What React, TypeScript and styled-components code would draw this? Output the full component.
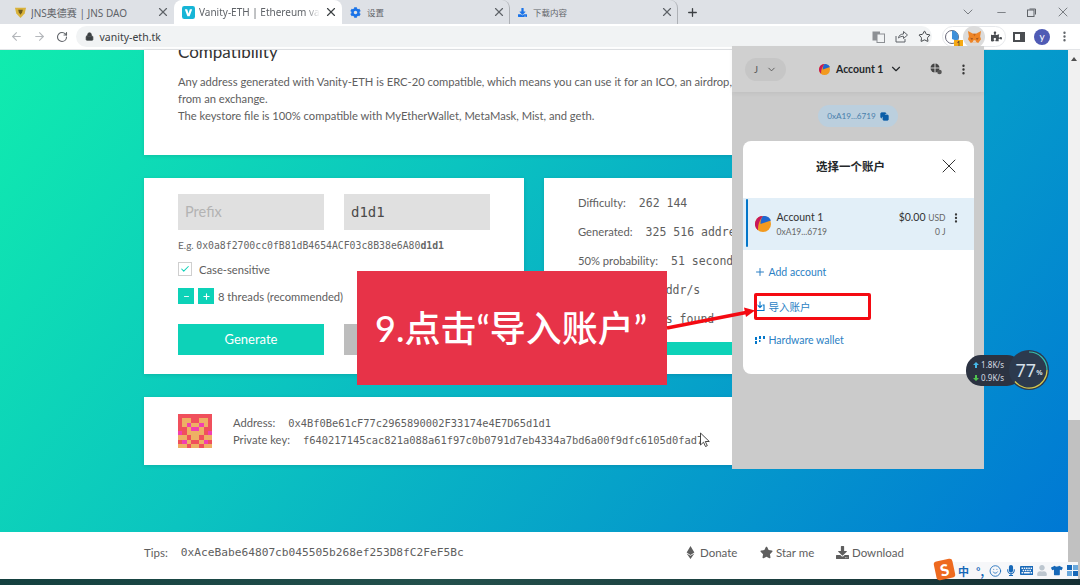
import React from "react";
import styled, { createGlobalStyle } from "styled-components";
import { ArrowLeft, ArrowRight, RotateCw, X, Plus, Minus, ChevronDown, Lock, Star, MoreVertical, Check, Smile, Copy } from "lucide-react";
import { FaCog, FaDownload, FaEthereum, FaKeyboard, FaMicrophone, FaPuzzlePiece, FaStar, FaTshirt, FaUser } from "react-icons/fa";

const SANS = `"Lato", "Noto Sans CJK SC", sans-serif`;
const UI = `"Noto Sans", "Noto Sans CJK SC", sans-serif`;
const MONO = `"DejaVu Sans Mono", "Liberation Mono", monospace`;
const TEAL = "#0dd2b8";

const GlobalStyle = createGlobalStyle`
    html, body {
        margin: 0;
        padding: 0;
        width: 1080px;
        height: 585px;
        overflow: hidden;
        background: #fff;
    }
`;

const Screen = styled.div`
    position: relative;
    display: flex;
    flex-direction: column;
    width: 1080px;
    height: 585px;
    overflow: hidden;
    font-family: ${SANS};
    color: #5e5e5e;
`;

/* browser chrome */
const TabStrip = styled.div`
    display: flex;
    align-items: stretch;
    height: 24px;
    padding-left: 6px;
    background: #dee1e6;
    flex-shrink: 0;
`;

const Tab = styled.div<{ $active?: boolean; $divider?: boolean }>`
    display: flex;
    align-items: center;
    gap: 4px;
    width: 168px;
    box-sizing: border-box;
    padding: 0 3px 0 8px;
    background: ${p => (p.$active ? "#fff" : "transparent")};
    border-radius: 8px 8px 0 0;
    border-right: ${p => (p.$divider ? "1px solid #aeb1b6" : "1px solid transparent")};
    font-family: ${UI};
    font-size: 10px;
    color: #5f6368;
`;

const TabTitle = styled.span<{ $fade?: boolean; $cjk?: boolean }>`
    flex: 1;
    overflow: hidden;
    white-space: nowrap;
    ${p => (p.$fade ? "mask-image: linear-gradient(90deg, #000 88%, transparent);" : "")}
    ${p => (p.$cjk ? "font-size: 8.5px; padding-left: 2px;" : "")}
`;

const NewTab = styled.div`
    display: flex;
    align-items: center;
    margin-left: 8px;
    color: #3c4043;
`;

const WindowButtons = styled.div`
    display: flex;
    align-items: center;
    gap: 19px;
    margin-left: auto;
    padding-right: 9px;
    color: #5f6368;
`;

const Toolbar = styled.div`
    display: flex;
    align-items: center;
    height: 26px;
    box-sizing: border-box;
    padding: 0 0 0 9px;
    gap: 9px;
    background: #fff;
    border-bottom: 1px solid #e3e5e8;
    flex-shrink: 0;
`;

const NavIcon = styled.span<{ $muted?: boolean }>`
    display: flex;
    width: 14px;
    justify-content: center;
    flex-shrink: 0;
    color: ${p => (p.$muted ? "#b4b7bb" : "#5f6368")};
`;

const Omnibox = styled.div`
    display: flex;
    align-items: center;
    gap: 6px;
    width: 856px;
    height: 21px;
    box-sizing: border-box;
    margin-left: -2px;
    padding: 0 1.5px 0 8.5px;
    border-radius: 11px;
    background: #f1f3f4;
    font-family: ${UI};
    font-size: 10.5px;
    color: #3c4043;
    flex-shrink: 0;
`;

const OmniIcons = styled.div`
    display: flex;
    align-items: center;
    gap: 10px;
    margin-left: auto;
    color: #5f6368;
`;

const ExtGroup = styled.div`
    display: flex;
    align-items: center;
    justify-content: space-between;
    width: 64px;
    height: 21px;
    box-sizing: border-box;
    margin-left: 1px;
    padding: 0;
    border: 1px solid #e6e8eb;
    border-radius: 11px;
    color: #4a4d51;
    flex-shrink: 0;
`;

const ExtButton = styled.span<{ $on?: boolean }>`
    position: relative;
    display: flex;
    align-items: center;
    justify-content: center;
    width: 18px;
    height: 18px;
    border-radius: 50%;
    background: ${p => (p.$on ? "#dcdcdc" : "transparent")};
    box-shadow: ${p => (p.$on ? "0 0 0 2px #dcdcdc" : "none")};
`;

const ExtBadge = styled.span`
    position: absolute;
    right: -2px;
    bottom: -3px;
    width: 9px;
    height: 9px;
    background: #f5a913;
    color: #333;
    font-size: 7px;
    line-height: 9px;
    text-align: center;
`;

const SidePanel = styled.span`
    width: 12px;
    height: 10px;
    box-sizing: border-box;
    margin-left: -2px;
    border: 2px solid #4a4d51;
    border-right-width: 5px;
    flex-shrink: 0;
`;

const Avatar = styled.span`
    width: 16px;
    height: 16px;
    border-radius: 50%;
    background: #4f5bb5;
    color: #fff;
    font-size: 10px;
    line-height: 14px;
    text-align: center;
    flex-shrink: 0;
`;

const MenuDots = styled(NavIcon)`
    margin-left: -2px;
`;

/* page */
const Viewport = styled.div`
    display: flex;
    flex: 1;
    min-height: 0;
`;

const Page = styled.div`
    display: flex;
    flex-direction: column;
    flex: 1;
`;

const Hero = styled.div`
    display: flex;
    flex-direction: column;
    gap: 23px;
    height: 482px;
    box-sizing: border-box;
    padding-left: 144px;
    background: linear-gradient(128deg, #10ecae 0%, #0bc4c0 38%, #0078d4 100%);
`;

const Card = styled.div`
    width: 780px;
    box-sizing: border-box;
    background: #fff;
    box-shadow: 0 1px 4px rgba(0, 0, 0, 0.12);
`;

const InfoCard = styled(Card)`
    height: 105px;
    padding: 0 34px;
    overflow: hidden;
    font-size: 11.2px;
    line-height: 17px;
`;

const Heading = styled.h2`
    margin: -9px 0 10px;
    font-size: 17px;
    font-weight: 400;
    line-height: 22px;
    color: #333;
`;

const Panels = styled.div`
    display: flex;
    gap: 20px;
    width: 780px;
`;

const Panel = styled(Card)`
    flex: 0 0 380px;
    width: 380px;
    height: 196px;
    overflow: hidden;
`;

const GenPanel = styled(Panel)`
    padding: 16px 34px 0;
`;

const Fields = styled.div`
    display: grid;
    grid-template-columns: 146px 146px;
    column-gap: 20px;
`;

const Field = styled.div<{ $mono?: boolean }>`
    height: 36px;
    padding-left: 7px;
    background: #e0e0e0;
    color: ${p => (p.$mono ? "#4a4a4a" : "#b3b3b3")};
    font-family: ${p => (p.$mono ? MONO : SANS)};
    font-size: ${p => (p.$mono ? "14px" : "14.5px")};
    line-height: 36px;
`;

const Example = styled.div`
    margin-top: 8px;
    font-size: 10px;
    line-height: 14px;
    color: #666;
`;

const Mono = styled.span<{ $size?: number; $bold?: boolean }>`
    font-family: ${MONO};
    font-size: ${p => p.$size ?? 9.8}px;
    font-weight: ${p => (p.$bold ? 700 : 400)};
`;

const CheckRow = styled.div`
    display: flex;
    align-items: center;
    gap: 7px;
    margin-top: 9px;
    font-size: 11.2px;
`;

const CheckBox = styled.span`
    display: flex;
    align-items: center;
    justify-content: center;
    width: 14px;
    height: 14px;
    box-sizing: border-box;
    border: 1px solid #cfcfcf;
    color: ${TEAL};
`;

const Threads = styled.div`
    display: flex;
    align-items: center;
    gap: 4px;
    margin-top: 12px;
    font-size: 11.2px;
`;

const StepButton = styled.span`
    display: flex;
    align-items: center;
    justify-content: center;
    width: 16px;
    height: 16px;
    background: ${TEAL};
    color: #fff;
`;

const Actions = styled.div`
    display: grid;
    grid-template-columns: 146px 146px;
    column-gap: 20px;
    margin-top: 20px;
`;

const ActionButton = styled.div<{ $disabled?: boolean }>`
    height: 31px;
    background: ${p => (p.$disabled ? "#bdbdbd" : TEAL)};
    color: #fff;
    font-size: 13px;
    line-height: 31px;
    text-align: center;
`;

const StatsPanel = styled(Panel)`
    display: flex;
    flex-direction: column;
    padding-top: 10px;
`;

const StatRow = styled.div`
    display: flex;
    align-items: center;
    gap: 13px;
    height: 29px;
    flex-shrink: 0;
    padding-left: 34px;
    font-size: 11.2px;
    white-space: nowrap;
`;

const ProgressBar = styled.div`
    height: 13px;
    margin-top: 9px;
    background: ${TEAL};
`;

const ResultCard = styled(Card)`
    display: flex;
    align-items: center;
    gap: 21px;
    height: 68px;
    padding-left: 34px;
    font-size: 11.2px;
`;

const Blockies = styled.div`
    display: grid;
    grid-template-columns: repeat(8, 1fr);
    width: 34px;
    height: 34px;
    flex-shrink: 0;
`;

const Block = styled.span<{ $color: string }>`
    background: ${p => p.$color};
`;

const ResultLines = styled.div`
    display: flex;
    flex-direction: column;
    gap: 3px;
    line-height: 14px;
    white-space: nowrap;
`;

const ResultLine = styled.div`
    display: flex;
    gap: 13px;
`;

const Footer = styled.div`
    display: flex;
    align-items: center;
    height: 47px;
    box-sizing: border-box;
    padding: 0 0 7px 144px;
    background: #fff;
    font-size: 11.5px;
`;

const Tips = styled.div`
    display: flex;
    align-items: center;
    gap: 13px;
    width: 540px;
`;

const FooterLink = styled.span<{ $width: number }>`
    display: flex;
    align-items: center;
    gap: 3px;
    width: ${p => p.$width}px;
`;

const Scrollbar = styled.div`
    display: flex;
    flex-direction: column;
    justify-content: space-between;
    align-items: center;
    width: 12px;
    background: #f1f1f1;
`;

const ScrollArrow = styled.span`
    margin-top: 7px;
    border-left: 3px solid transparent;
    border-right: 3px solid transparent;
    border-bottom: 4px solid #505050;
`;

const ScrollThumb = styled.span`
    width: 100%;
    height: 159px;
    background: #c1c1c1;
`;

const Taskbar = styled.div`
    height: 6px;
    background: linear-gradient(90deg, #14403f, #23504c 40%, #152f33);
    flex-shrink: 0;
`;

/* metamask popup */
const Popup = styled.div`
    position: absolute;
    left: 732px;
    top: 46px;
    display: flex;
    flex-direction: column;
    width: 252px;
    height: 423px;
    background: #cbcbcb;
`;

const PopupHeader = styled.div`
    display: flex;
    align-items: center;
    height: 46px;
    box-sizing: border-box;
    padding: 0 14px 0 13px;
    background: #d0d0d0;
    box-shadow: 0 2px 4px rgba(0, 0, 0, 0.05);
    color: #333;
`;

const NetworkPill = styled.div`
    display: flex;
    align-items: center;
    gap: 8px;
    width: 41px;
    height: 23px;
    box-sizing: border-box;
    padding-left: 9px;
    border-radius: 12px;
    background: #c6c6c6;
    font-size: 9.5px;
    color: #555;
`;

const AccountPill = styled.div`
    display: flex;
    align-items: center;
    gap: 6px;
    margin-left: 33px;
    font-size: 10.5px;
    font-weight: 700;
    color: #24272a;
`;

const HeaderIcons = styled.div`
    display: flex;
    align-items: center;
    gap: 15px;
    margin-left: auto;
`;

const AddressPill = styled.div`
    display: flex;
    align-items: center;
    justify-content: center;
    gap: 4px;
    align-self: center;
    width: 80px;
    height: 22px;
    margin-top: 13px;
    border-radius: 12px;
    background: #bbcfde;
    font-size: 8.2px;
    color: #4a80ac;
`;

const Modal = styled.div`
    display: flex;
    flex-direction: column;
    align-self: center;
    width: 231px;
    height: 233px;
    margin-top: 14px;
    border-radius: 8px;
    background: #fff;
`;

const ModalHead = styled.div`
    position: relative;
    display: flex;
    align-items: center;
    justify-content: center;
    height: 57px;
    box-sizing: border-box;
    padding: 0 15px 7px 0;
    font-size: 11.5px;
    font-weight: 700;
    color: #24272a;
`;

const ModalClose = styled.span`
    position: absolute;
    right: 13px;
    top: 13px;
    display: flex;
    color: #333;
`;

const AccountRow = styled.div`
    position: relative;
    display: flex;
    align-items: center;
    height: 52px;
    padding-left: 12px;
    background: #e2eff8;
`;

const RowAccent = styled.span`
    position: absolute;
    left: 3px;
    top: 1px;
    bottom: 3px;
    width: 2.5px;
    border-radius: 2px;
    background: #0376c9;
`;

const AccountText = styled.div`
    display: flex;
    flex-direction: column;
    gap: 3px;
    margin-left: 6px;
    font-size: 10.5px;
    line-height: 13px;
    color: #333;
`;

const AccountSub = styled.span<{ $right?: boolean }>`
    font-size: 8.5px;
    line-height: 11px;
    color: #666;
    text-align: ${p => (p.$right ? "right" : "left")};
`;

const Balance = styled(AccountText)`
    margin-left: auto;
    margin-right: 4px;
    text-align: right;
`;

const RowMenu = styled.span`
    display: flex;
    margin-right: 12px;
    margin-top: -13px;
    color: #333;
`;

const MenuList = styled.div`
    display: flex;
    flex-direction: column;
    padding: 5px 0 0 11px;
`;

const MenuItem = styled.div`
    display: flex;
    align-items: center;
    gap: 3px;
    height: 34px;
    font-size: 10.5px;
    color: #2b7fc4;
`;

/* things drawn over the recording */
const Banner = styled.div`
    position: absolute;
    left: 357px;
    top: 271px;
    display: flex;
    align-items: center;
    width: 310px;
    height: 114px;
    box-sizing: border-box;
    padding: 0 0 5px 18px;
    background: #e73348;
    color: #fff;
    font-family: "Lato", "Noto Sans CJK SC", sans-serif;
    font-size: 36px;
    font-weight: 500;
    white-space: nowrap;
`;

const RedBox = styled.div`
    position: absolute;
    left: 754px;
    top: 293px;
    width: 117px;
    height: 27px;
    box-sizing: border-box;
    border: 3px solid #f40a12;
    border-radius: 2px;
`;

const Overlay = styled.svg`
    position: absolute;
    left: 0;
    top: 0;
    pointer-events: none;
`;

const SpeedPill = styled.div`
    position: absolute;
    left: 966px;
    top: 355px;
    display: flex;
    flex-direction: column;
    justify-content: center;
    gap: 4px;
    width: 56px;
    height: 31px;
    box-sizing: border-box;
    padding-left: 7px;
    border-radius: 15px;
    background: #2c3342;
    color: #d7dde4;
    font-family: ${UI};
    font-size: 8px;
    line-height: 9px;
`;

const SpeedDial = styled.div`
    position: absolute;
    left: 1009px;
    top: 350px;
    display: flex;
    align-items: center;
    justify-content: center;
    width: 40px;
    height: 40px;
    color: #d5e0ea;
    font-family: ${UI};
    font-size: 18px;
`;

const DialRing = styled.svg`
    position: absolute;
    left: 0;
    top: 0;
`;

const DialValue = styled.span`
    position: relative;
`;

const DialPercent = styled.span`
    position: relative;
    margin-top: 5px;
    font-size: 7px;
    font-weight: 700;
`;

const ImeBar = styled.div`
    position: absolute;
    left: 936px;
    top: 562px;
    display: flex;
    align-items: center;
    gap: 4px;
    width: 142px;
    height: 17px;
    box-sizing: border-box;
    padding-left: 22px;
    background: #f6f7f9;
    color: #1668b8;
    font-family: "Noto Sans CJK SC", sans-serif;
    font-size: 11px;
    font-weight: 700;
`;

const ImePunct = styled.span`
    margin: 0 1px 0 3px;
`;

const ImeLogo = styled.div`
    position: absolute;
    left: 935px;
    top: 560px;
    width: 19px;
    height: 19px;
    border-radius: 3px;
    transform: rotate(-12deg);
    background: #ee6a1f;
    color: #fff;
    font-family: ${SANS};
    font-size: 16px;
    font-weight: 900;
    line-height: 19px;
    text-align: center;
`;

const ImeGrid = styled.span`
    display: grid;
    grid-template-columns: 5px 5px;
    gap: 1px;
`;

const ImeCell = styled.span<{ $light?: boolean }>`
    height: 5px;
    background: ${p => (p.$light ? "#69a8dc" : "#1668b8")};
`;

const R = "#f0505c";
const O = "#eeb064";
const P = "#f23fb0";
const BLOCKS = [
    R, R, R, R, R, R, R, R,
    R, O, O, R, R, O, O, R,
    R, O, P, O, O, P, O, R,
    R, R, O, P, P, O, R, R,
    P, R, O, O, O, O, R, P,
    O, O, R, O, O, R, O, O,
    R, P, O, R, R, O, P, R,
    O, O, R, O, O, R, O, O,
];

const AccountLogo: React.FC<{ size: number }> = ({ size }) => (
    <svg width={size} height={size} viewBox="0 0 16 16">
        <circle cx="8" cy="8" r="8" fill="#f29a1f" />
        <path d="M8 0A8 8 0 0 0 3 14.2C3 9 4 5 8 0Z" fill="#c8175b" />
        <path d="M5.5 8 16 4.5A8 8 0 0 0 8 0C6 2 5.5 5 5.5 8Z" fill="#1f66d0" />
    </svg>
);

const Fox: React.FC = () => (
    <svg width="15" height="14" viewBox="0 0 16 15">
        <path d="M1 1 6.5 4h3L15 1l-1 6 1 3-3 4-2-1H6l-2 1-3-4 1-3Z" fill="#ee8527" />
        <path d="M6.5 4 8 7l1.5-3ZM3 8l3 1-1 2ZM13 8l-3 1 1 2Z" fill="#c9651a" />
        <path d="M6 13h4l-1-2H7Z" fill="#e8d5c4" />
        <path d="M4.8 8.8 6 9.2l-.6 1ZM11.2 8.8 10 9.2l.6 1Z" fill="#2d2d2d" />
    </svg>
);

const App: React.FC = () => {
    return (
        <Screen>
            <GlobalStyle />
            <TabStrip>
                <Tab>
                    <svg width="13" height="13" viewBox="0 0 14 14">
                        <path d="M1 2h12l-1.5 6L7 13 2.5 8Z" fill="#d9b23a" />
                        <path d="M4.5 4h5l-.8 3L7 9.5 5.3 7Z" fill="#6b5a1e" />
                    </svg>
                    <TabTitle>JNS奥德赛 | JNS DAO</TabTitle>
                    <X size={14} strokeWidth={2} />
                </Tab>
                <Tab $active>
                    <svg width="13" height="13" viewBox="0 0 14 14">
                        <rect width="14" height="14" rx="2.5" fill="#16b5d6" />
                        <path d="M3 3.5h2.6L7 8l1.4-4.5H11L8.2 11H5.8Z" fill="#fff" />
                    </svg>
                    <TabTitle $fade>Vanity-ETH | Ethereum vanity address generator</TabTitle>
                    <X size={14} strokeWidth={2} color="#3c4043" />
                </Tab>
                <Tab $divider>
                    <FaCog size={11} color="#1a73e8" />
                    <TabTitle $cjk>设置</TabTitle>
                    <X size={14} strokeWidth={2} />
                </Tab>
                <Tab $divider>
                    <FaDownload size={9} color="#1a73e8" />
                    <TabTitle $cjk>下载内容</TabTitle>
                    <X size={14} strokeWidth={2} />
                </Tab>
                <NewTab><Plus size={13} strokeWidth={2.4} /></NewTab>
                <WindowButtons>
                    <ChevronDown size={16} strokeWidth={1.2} />
                    <Minus size={13} strokeWidth={1.4} />
                    <svg width="9" height="9" viewBox="0 0 9 9" fill="none" stroke="currentColor">
                        <rect x="0.5" y="2" width="6.5" height="6.5" />
                        <path d="M2.5 1H8.5V6.5" />
                    </svg>
                    <X size={16} strokeWidth={1.2} />
                </WindowButtons>
            </TabStrip>
            <Toolbar>
                <NavIcon $muted><ArrowLeft size={13} /></NavIcon>
                <NavIcon $muted><ArrowRight size={13} /></NavIcon>
                <NavIcon><RotateCw size={12} strokeWidth={2.2} /></NavIcon>
                <Omnibox>
                    <Lock size={9} fill="currentColor" strokeWidth={2} />
                    vanity-eth.tk
                    <OmniIcons>
                        <svg width="13" height="12" viewBox="0 0 13 12">
                            <rect x="0.5" y="0.5" width="7.5" height="9" fill="#8d9094" />
                            <rect x="5" y="3" width="7.5" height="8.5" fill="#f1f3f4" stroke="#8d9094" />
                        </svg>
                        <svg width="13" height="13" viewBox="0 0 13 13" fill="none" stroke="currentColor" strokeWidth="1">
                            <path d="M1 6v6h9V9" />
                            <path d="M3.5 8c.3-2.7 2.5-4 5-4V1.5L12.5 5l-4 3.5V6.3C6.5 6.3 5 6.8 3.5 8Z" />
                        </svg>
                        <Star size={13} strokeWidth={1.8} color="#3c4043" />
                    </OmniIcons>
                </Omnibox>
                <ExtGroup>
                    <ExtButton>
                        <svg width="14" height="14" viewBox="0 0 14 14">
                            <circle cx="7" cy="7" r="6.5" fill="#fff" stroke="#667" />
                            <path d="M7 .5A6.5 6.5 0 0 1 12 11L7 9Z" fill="#3f8fd8" />
                        </svg>
                        <ExtBadge>1</ExtBadge>
                    </ExtButton>
                    <ExtButton $on><Fox /></ExtButton>
                    <ExtButton><FaPuzzlePiece size={11} /></ExtButton>
                </ExtGroup>
                <SidePanel />
                <Avatar>y</Avatar>
                <MenuDots><MoreVertical size={13} strokeWidth={2.4} /></MenuDots>
            </Toolbar>
            <Viewport>
                <Page>
                    <Hero>
                        <InfoCard>
                            <Heading>Compatibility</Heading>
                            Any address generated with Vanity-ETH is ERC-20 compatible, which means you can use it for an ICO, an airdrop, or to withdraw your funds
                            <br />from an exchange.
                            <br />The keystore file is 100% compatible with MyEtherWallet, MetaMask, Mist, and geth.
                        </InfoCard>
                        <Panels>
                            <GenPanel>
                                <Fields>
                                    <Field>Prefix</Field>
                                    <Field $mono>d1d1</Field>
                                </Fields>
                                <Example>
                                    E.g.&nbsp;<Mono>0x0a8f2700cc0fB81dB4654ACF03c8B38e6A80</Mono><Mono $bold>d1d1</Mono>
                                </Example>
                                <CheckRow>
                                    <CheckBox><Check size={10} strokeWidth={2.5} /></CheckBox>
                                    Case-sensitive
                                </CheckRow>
                                <Threads>
                                    <StepButton><Minus size={7} strokeWidth={3} /></StepButton>
                                    <StepButton><Plus size={9} strokeWidth={3} /></StepButton>
                                    8 threads (recommended)
                                </Threads>
                                <Actions>
                                    <ActionButton>Generate</ActionButton>
                                    <ActionButton $disabled>Stop</ActionButton>
                                </Actions>
                            </GenPanel>
                            <StatsPanel>
                                <StatRow>Difficulty: <Mono $size={11.5}>262 144</Mono></StatRow>
                                <StatRow>Generated: <Mono $size={11.5}>325 516 addresses</Mono></StatRow>
                                <StatRow>50% probability: <Mono $size={11.5}>51 seconds</Mono></StatRow>
                                <StatRow>Speed: <Mono $size={11.5}>6510 addr/s</Mono></StatRow>
                                <StatRow>Status: <Mono $size={11.5}>Address found</Mono></StatRow>
                                <ProgressBar />
                            </StatsPanel>
                        </Panels>
                        <ResultCard>
                            <Blockies>
                                {BLOCKS.map((c, i) => <Block key={i} $color={c} />)}
                            </Blockies>
                            <ResultLines>
                                <ResultLine>Address: <Mono $size={10.4}>0x4Bf0Be61cF77c2965890002F33174e4E7D65d1d1</Mono></ResultLine>
                                <ResultLine>Private key: <Mono $size={10.4}>f640217145cac821a088a61f97c0b0791d7eb4334a7bd6a00f9dfc6105d0fad7</Mono></ResultLine>
                            </ResultLines>
                        </ResultCard>
                    </Hero>
                    <Footer>
                        <Tips>Tips: <Mono $size={11.2}>0xAceBabe64807cb045505b268ef253D8fC2FeF5Bc</Mono></Tips>
                        <FooterLink $width={76}><FaEthereum size={13} />Donate</FooterLink>
                        <FooterLink $width={76}><FaStar size={13} />Star me</FooterLink>
                        <FooterLink $width={80}><FaDownload size={13} />Download</FooterLink>
                    </Footer>
                </Page>
                <Scrollbar>
                    <ScrollArrow />
                    <ScrollThumb />
                </Scrollbar>
            </Viewport>
            <Taskbar />

            <Popup>
                <PopupHeader>
                    <NetworkPill>J <ChevronDown size={11} /></NetworkPill>
                    <AccountPill>
                        <AccountLogo size={11} />
                        Account 1
                        <ChevronDown size={14} />
                    </AccountPill>
                    <HeaderIcons>
                        <svg width="12" height="12" viewBox="0 0 12 12">
                            <circle cx="5" cy="5" r="4.5" fill="#444" />
                            <path d="M0 5h10M5 0v10" stroke="#d0d0d0" />
                            <circle cx="9.5" cy="9" r="2.3" fill="#555" />
                        </svg>
                        <MoreVertical size={13} strokeWidth={2.4} />
                    </HeaderIcons>
                </PopupHeader>
                <AddressPill>
                    0xA19...6719
                    <Copy size={9} fill="#0b5ea8" color="#0b5ea8" />
                </AddressPill>
                <Modal>
                    <ModalHead>
                        选择一个账户
                        <ModalClose><X size={24} strokeWidth={1} /></ModalClose>
                    </ModalHead>
                    <AccountRow>
                        <RowAccent />
                        <AccountLogo size={16} />
                        <AccountText>
                            Account 1
                            <AccountSub>0xA19...6719</AccountSub>
                        </AccountText>
                        <Balance>
                            <span>$0.00 <AccountSub>USD</AccountSub></span>
                            <AccountSub $right>0 J</AccountSub>
                        </Balance>
                        <RowMenu><MoreVertical size={12} strokeWidth={2.6} /></RowMenu>
                    </AccountRow>
                    <MenuList>
                        <MenuItem><Plus size={12} strokeWidth={2} />Add account</MenuItem>
                        <MenuItem>
                            <svg width="12" height="12" viewBox="0 0 12 12" fill="none" stroke="#0376c9" strokeWidth="1.1">
                                <path d="M3.5 5H2v5.5h8V5H8.5M6 1.5v6M4 5.5l2 2 2-2" />
                            </svg>
                            导入账户
                        </MenuItem>
                        <MenuItem>
                            <svg width="12" height="12" viewBox="0 0 12 12" fill="#0376c9">
                                <rect x="1" y="3" width="2" height="3" />
                                <rect x="5" y="2" width="2" height="3" />
                                <rect x="9" y="2" width="2" height="3" />
                                <rect x="1" y="7" width="2" height="3" />
                                <rect x="5" y="6" width="1.5" height="2" />
                            </svg>
                            Hardware wallet
                        </MenuItem>
                    </MenuList>
                </Modal>
            </Popup>

            <Banner>9.点击“导入账户”</Banner>
            <RedBox />
            <Overlay width="1080" height="585">
                <path d="M667 328 746 312.5" stroke="#f40a12" strokeWidth="3.5" />
                <path d="M744 307.5 755 310.5 746 317Z" fill="#f40a12" />
                <path d="M700.5 433v12l3-2.8 2 4.3 1.8-.8-2-4.2h4Z" fill="#fff" stroke="#333" strokeWidth="0.9" />
            </Overlay>

            <SpeedPill>
                <span>
                    <svg width="6" height="6" viewBox="0 0 6 6"><path d="M3 0 6 3H4v3H2V3H0Z" fill="#46b8e8" /></svg>
                    {" "}1.8K/s
                </span>
                <span>
                    <svg width="6" height="6" viewBox="0 0 6 6"><path d="M3 6 6 3H4V0H2V3H0Z" fill="#4ec24e" /></svg>
                    {" "}0.9K/s
                </span>
            </SpeedPill>
            <SpeedDial>
                <DialRing width="40" height="40" viewBox="0 0 40 40" fill="none">
                    <circle cx="20" cy="20" r="20" fill="#2c3a4e" />
                    <path d="M20 2A18 18 0 0 1 38 20" stroke="#35c0b0" strokeWidth="1.2" />
                    <path d="M38 20A18 18 0 0 1 6 31.5" stroke="#d6c94e" strokeWidth="1.2" />
                </DialRing>
                <DialValue>77</DialValue>
                <DialPercent>%</DialPercent>
            </SpeedDial>

            <ImeBar>
                中
                <ImePunct>°,</ImePunct>
                <Smile size={14} strokeWidth={1.6} />
                <FaMicrophone size={11} />
                <FaKeyboard size={15} />
                <FaUser size={11} color="#bcc6cf" />
                <FaTshirt size={13} />
                <ImeGrid>
                    <ImeCell /><ImeCell $light />
                    <ImeCell $light /><ImeCell />
                </ImeGrid>
            </ImeBar>
            <ImeLogo>S</ImeLogo>
        </Screen>
    );
};

export default App;
